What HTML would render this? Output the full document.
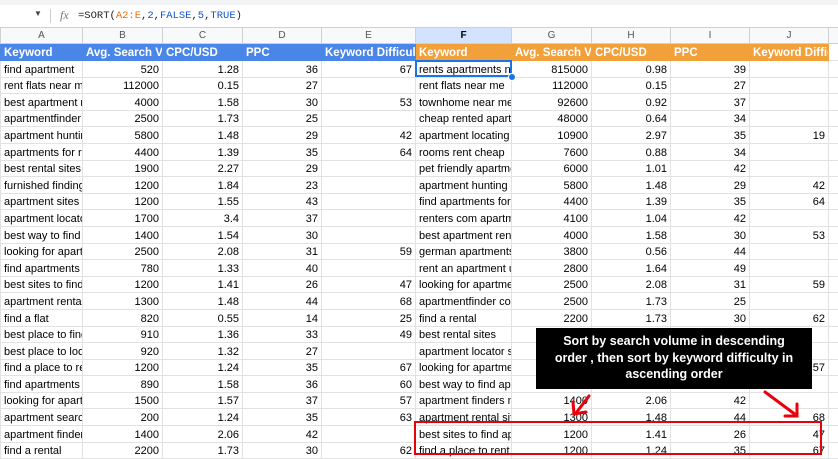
<!DOCTYPE html>
<html><head><meta charset="utf-8"><style>
body{margin:0;width:838px;height:456px;overflow:hidden;background:#fff;font-family:"Liberation Sans",Arial,sans-serif;position:relative}
.top{position:absolute;left:0;top:0;width:838px;height:5px;background:#f1f3f4}
.fbar{position:absolute;left:0;top:5px;width:838px;height:22px;background:#fff;border-bottom:1px solid #dadce0}
.fbar .dd{position:absolute;left:34px;top:4px;font-size:8px;color:#444}
.fbar .sep{position:absolute;left:50px;top:4px;width:1px;height:14px;background:#ccc}
.fbar .fx{position:absolute;left:60px;top:3px;font-family:"Liberation Serif",serif;font-style:italic;font-size:12px;color:#777}
.fbar .f{position:absolute;left:78px;top:5px;font-family:"Liberation Mono",monospace;font-size:10.5px;color:#222}
.o{color:#e8710a}.b{color:#1155cc}
table{position:absolute;left:0;top:27px;width:838px;border-collapse:collapse;table-layout:fixed;font-size:11px}
td{border:1px solid #e2e2e2;padding:0 3px;height:15.6px;line-height:13px;vertical-align:bottom;white-space:nowrap;overflow:hidden;color:#000;text-align:right}
td.l{text-align:left;text-overflow:clip}
tr.ch td{background:#f8f9fa;color:#555;text-align:center;font-size:10px;height:15px;vertical-align:middle;border-color:#d0d0d0}
tr.ch td.sel{background:#d3e3fd;color:#000;font-weight:bold}
tr.h td{font-weight:bold;color:#fff;text-align:left;height:16px;font-size:11.5px}
tr.h td.bl{background:#4a86e8;border-color:#4a86e8}
tr.h td.or{background:#f1a03a;border-color:#f1a03a}
.selbox{position:absolute;left:415px;top:60px;width:97px;height:17px;border:2px solid #1a73e8;box-sizing:border-box}
.dot{position:absolute;left:508px;top:73px;width:6px;height:6px;border-radius:50%;background:#1a73e8;border:1px solid #fff}
.note{position:absolute;left:536px;top:328px;width:276px;height:61px;background:#000;color:#fff;font-weight:bold;font-size:12.5px;text-align:center;line-height:16.5px;padding-top:5px;box-sizing:border-box}
.red{position:absolute;left:414px;top:421px;width:408px;height:34px;border:2px solid #e8000b;box-sizing:border-box}
</style></head><body>
<div class="top"></div>
<div class="fbar"><span class="dd">▼</span><span class="sep"></span><span class="fx">fx</span><span class="f">=SORT(<span class="o">A2:E</span>,<span class="b">2</span>,<span class="b">FALSE</span>,<span class="b">5</span>,<span class="b">TRUE</span>)</span></div>
<table>
<colgroup><col style="width:82px"><col style="width:80px"><col style="width:80px"><col style="width:79px"><col style="width:94px"><col style="width:96px"><col style="width:80px"><col style="width:79px"><col style="width:79px"><col style="width:79px"><col style="width:10px"></colgroup>
<tr class="ch"><td>A</td><td>B</td><td>C</td><td>D</td><td>E</td><td class="sel">F</td><td>G</td><td>H</td><td>I</td><td>J</td><td></td></tr>
<tr class="h"><td class="bl">Keyword</td><td class="bl">Avg. Search Volume</td><td class="bl">CPC/USD</td><td class="bl">PPC</td><td class="bl">Keyword Difficulty</td><td class="or">Keyword</td><td class="or">Avg. Search Volume</td><td class="or">CPC/USD</td><td class="or">PPC</td><td class="or">Keyword Difficulty</td><td></td></tr>
<tr><td class="l">find apartment</td><td>520</td><td>1.28</td><td>36</td><td>67</td><td class="l">rents apartments near</td><td>815000</td><td>0.98</td><td>39</td><td></td><td></td></tr>
<tr><td class="l">rent flats near me</td><td>112000</td><td>0.15</td><td>27</td><td></td><td class="l">rent flats near me</td><td>112000</td><td>0.15</td><td>27</td><td></td><td></td></tr>
<tr><td class="l">best apartment rental</td><td>4000</td><td>1.58</td><td>30</td><td>53</td><td class="l">townhome near me rent</td><td>92600</td><td>0.92</td><td>37</td><td></td><td></td></tr>
<tr><td class="l">apartmentfinder</td><td>2500</td><td>1.73</td><td>25</td><td></td><td class="l">cheap rented apartments</td><td>48000</td><td>0.64</td><td>34</td><td></td><td></td></tr>
<tr><td class="l">apartment hunting</td><td>5800</td><td>1.48</td><td>29</td><td>42</td><td class="l">apartment locating</td><td>10900</td><td>2.97</td><td>35</td><td>19</td><td></td></tr>
<tr><td class="l">apartments for rent</td><td>4400</td><td>1.39</td><td>35</td><td>64</td><td class="l">rooms rent cheap</td><td>7600</td><td>0.88</td><td>34</td><td></td><td></td></tr>
<tr><td class="l">best rental sites</td><td>1900</td><td>2.27</td><td>29</td><td></td><td class="l">pet friendly apartments</td><td>6000</td><td>1.01</td><td>42</td><td></td><td></td></tr>
<tr><td class="l">furnished finding</td><td>1200</td><td>1.84</td><td>23</td><td></td><td class="l">apartment hunting</td><td>5800</td><td>1.48</td><td>29</td><td>42</td><td></td></tr>
<tr><td class="l">apartment sites</td><td>1200</td><td>1.55</td><td>43</td><td></td><td class="l">find apartments for rent</td><td>4400</td><td>1.39</td><td>35</td><td>64</td><td></td></tr>
<tr><td class="l">apartment locator</td><td>1700</td><td>3.4</td><td>37</td><td></td><td class="l">renters com apartments</td><td>4100</td><td>1.04</td><td>42</td><td></td><td></td></tr>
<tr><td class="l">best way to find</td><td>1400</td><td>1.54</td><td>30</td><td></td><td class="l">best apartment rental</td><td>4000</td><td>1.58</td><td>30</td><td>53</td><td></td></tr>
<tr><td class="l">looking for apartment</td><td>2500</td><td>2.08</td><td>31</td><td>59</td><td class="l">german apartments</td><td>3800</td><td>0.56</td><td>44</td><td></td><td></td></tr>
<tr><td class="l">find apartments to</td><td>780</td><td>1.33</td><td>40</td><td></td><td class="l">rent an apartment usa</td><td>2800</td><td>1.64</td><td>49</td><td></td><td></td></tr>
<tr><td class="l">best sites to find</td><td>1200</td><td>1.41</td><td>26</td><td>47</td><td class="l">looking for apartments</td><td>2500</td><td>2.08</td><td>31</td><td>59</td><td></td></tr>
<tr><td class="l">apartment rental</td><td>1300</td><td>1.48</td><td>44</td><td>68</td><td class="l">apartmentfinder com</td><td>2500</td><td>1.73</td><td>25</td><td></td><td></td></tr>
<tr><td class="l">find a flat</td><td>820</td><td>0.55</td><td>14</td><td>25</td><td class="l">find a rental</td><td>2200</td><td>1.73</td><td>30</td><td>62</td><td></td></tr>
<tr><td class="l">best place to find</td><td>910</td><td>1.36</td><td>33</td><td>49</td><td class="l">best rental sites</td><td></td><td></td><td></td><td></td><td></td></tr>
<tr><td class="l">best place to look</td><td>920</td><td>1.32</td><td>27</td><td></td><td class="l">apartment locator search</td><td></td><td></td><td></td><td></td><td></td></tr>
<tr><td class="l">find a place to rent</td><td>1200</td><td>1.24</td><td>35</td><td>67</td><td class="l">looking for apartment</td><td></td><td></td><td></td><td>57</td><td></td></tr>
<tr><td class="l">find apartments near</td><td>890</td><td>1.58</td><td>36</td><td>60</td><td class="l">best way to find apartment</td><td></td><td></td><td></td><td></td><td></td></tr>
<tr><td class="l">looking for apartment</td><td>1500</td><td>1.57</td><td>37</td><td>57</td><td class="l">apartment finders near</td><td>1400</td><td>2.06</td><td>42</td><td></td><td></td></tr>
<tr><td class="l">apartment search</td><td>200</td><td>1.24</td><td>35</td><td>63</td><td class="l">apartment rental sites</td><td>1300</td><td>1.48</td><td>44</td><td>68</td><td></td></tr>
<tr><td class="l">apartment finder</td><td>1400</td><td>2.06</td><td>42</td><td></td><td class="l">best sites to find apartment</td><td>1200</td><td>1.41</td><td>26</td><td>47</td><td></td></tr>
<tr><td class="l">find a rental</td><td>2200</td><td>1.73</td><td>30</td><td>62</td><td class="l">find a place to rent</td><td>1200</td><td>1.24</td><td>35</td><td>67</td><td></td></tr>
</table>
<div class="selbox"></div><div class="dot"></div>
<div class="note">Sort by search volume in descending<br>order , then sort by keyword difficulty in<br>ascending order</div>
<div class="red"></div>
<svg style="position:absolute;left:0;top:0" width="838" height="456">
<g stroke="#e8000b" stroke-width="3" fill="none" stroke-linecap="round">
<path d="M589 396 L576 413"/><path d="M573 402 L574 414 L586 412"/>
<path d="M765 392 L796 415"/><path d="M785 416 L797 416 L797 404"/>
</g></svg>
</body></html>
